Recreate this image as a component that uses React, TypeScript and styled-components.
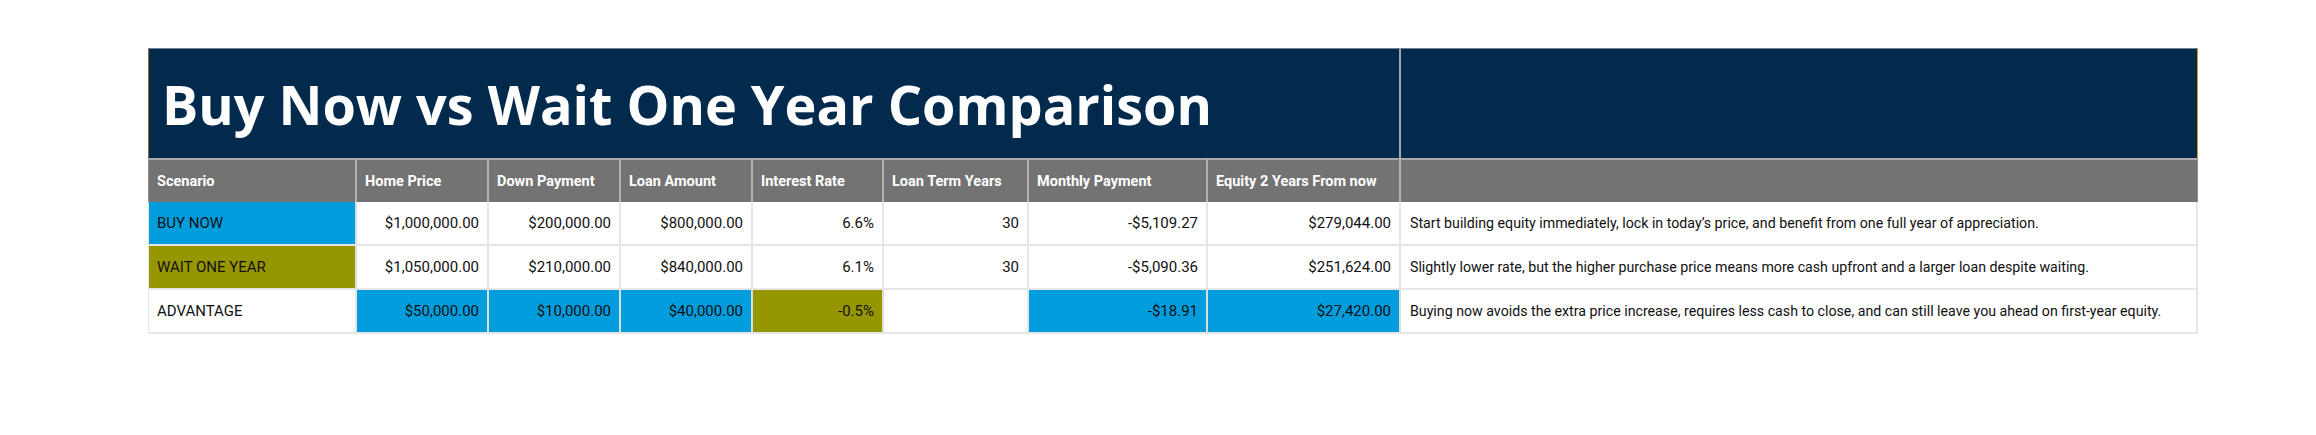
import React from 'react';
import styled, { createGlobalStyle } from 'styled-components';

const NAVY = '#012a4c';
const GRAY = '#737373';
const BLUE = '#019ddd';
const OLIVE = '#969600';

const GlobalStyle = createGlobalStyle`
    html, body {
        margin: 0;
        padding: 0;
        background: #ffffff;
    }
    body {
        font-family: Roboto, 'Liberation Sans', sans-serif;
        color: #111111;
    }
`;

const Page = styled.div`
    padding: 48px 0 0 148px;
    height: 435px;
    box-sizing: border-box;
`;

const Sheet = styled.div`
    display: grid;
    grid-template-columns: 209px 132px 132px 132px 131px 145px 179px 193px 797px;
    grid-template-rows: 110px 44px 44px 44px 44px;
    width: 2050px;
`;

const TitleCell = styled.div<{ $span: string; $edge?: 'left' | 'right' }>`
    grid-column: ${({ $span }) => $span};
    background: ${NAVY};
    border-top: 1px solid #6f7f8c;
    border-left: ${({ $edge }) => ($edge === 'left' ? '1px solid #8a6d28' : '0')};
    border-right: ${({ $edge }) => ($edge === 'right' ? '1px solid #d49a1e' : '2px solid #a5a8ab')};
    box-sizing: border-box;
    display: flex;
    align-items: center;
    padding-left: 13px;
`;

const Title = styled.h1`
    margin: 0;
    color: #ffffff;
    font-family: 'Open Sans', Roboto, sans-serif;
    font-weight: 700;
    font-size: 54px;
    line-height: 1;
`;

const HeadCell = styled.div<{ $first?: boolean; $last?: boolean }>`
    background: ${GRAY};
    color: #ffffff;
    font-weight: 700;
    font-size: 14.5px;
    border-top: 2px solid #a9a9a9;
    border-right: ${({ $last }) => ($last ? '1px solid #8c8c8c' : '2px solid #b3b3b3')};
    border-left: ${({ $first }) => ($first ? '1px solid #8c8c8c' : '0')};
    box-sizing: border-box;
    display: flex;
    align-items: center;
    padding-left: 8px;
    white-space: nowrap;
`;

const Cell = styled.div<{ $bg?: string; $align?: 'left' | 'right'; $first?: boolean; $note?: boolean }>`
    background: ${({ $bg }) => $bg || '#ffffff'};
    font-size: ${({ $note }) => ($note ? '14.2px' : '15px')};
    border-bottom: 2px solid #e6e6e6;
    border-right: 2px solid ${({ $bg }) => ($bg ? '#dcdcdc' : '#e6e6e6')};
    border-left: ${({ $first }) => ($first ? '1px solid #e6e6e6' : '0')};
    box-sizing: border-box;
    display: flex;
    align-items: center;
    justify-content: ${({ $align }) => ($align === 'right' ? 'flex-end' : 'flex-start')};
    padding: 0 8px 0 ${({ $note }) => ($note ? '9px' : '8px')};
    white-space: nowrap;
`;

type Value = { text: string; bg?: string };

type Row = {
    label: string;
    labelBg?: string;
    values: Value[];
    note: string;
};

const headers = [
    'Scenario',
    'Home Price',
    'Down Payment',
    'Loan Amount',
    'Interest Rate',
    'Loan Term Years',
    'Monthly Payment',
    'Equity 2 Years From now',
];

const rows: Row[] = [
    {
        label: 'BUY NOW',
        labelBg: BLUE,
        values: [
            { text: '$1,000,000.00' },
            { text: '$200,000.00' },
            { text: '$800,000.00' },
            { text: '6.6%' },
            { text: '30' },
            { text: '-$5,109.27' },
            { text: '$279,044.00' },
        ],
        note: 'Start building equity immediately, lock in today\u2019s price, and benefit from one full year of appreciation.',
    },
    {
        label: 'WAIT ONE YEAR',
        labelBg: OLIVE,
        values: [
            { text: '$1,050,000.00' },
            { text: '$210,000.00' },
            { text: '$840,000.00' },
            { text: '6.1%' },
            { text: '30' },
            { text: '-$5,090.36' },
            { text: '$251,624.00' },
        ],
        note: 'Slightly lower rate, but the higher purchase price means more cash upfront and a larger loan despite waiting.',
    },
    {
        label: 'ADVANTAGE',
        values: [
            { text: '$50,000.00', bg: BLUE },
            { text: '$10,000.00', bg: BLUE },
            { text: '$40,000.00', bg: BLUE },
            { text: '-0.5%', bg: OLIVE },
            { text: '' },
            { text: '-$18.91', bg: BLUE },
            { text: '$27,420.00', bg: BLUE },
        ],
        note: 'Buying now avoids the extra price increase, requires less cash to close, and can still leave you ahead on first-year equity.',
    },
];

export default function App() {
    return (
        <>
            <GlobalStyle />
            <Page>
                <Sheet>
                    <TitleCell $span="1 / 9" $edge="left">
                        <Title>Buy Now vs Wait One Year Comparison</Title>
                    </TitleCell>
                    <TitleCell $span="9 / 10" $edge="right" />

                    {headers.map((h, i) => (
                        <HeadCell key={h} $first={i === 0}>
                            {h}
                        </HeadCell>
                    ))}
                    <HeadCell $last />

                    {rows.map((row) => (
                        <React.Fragment key={row.label}>
                            <Cell $bg={row.labelBg} $first>
                                {row.label}
                            </Cell>
                            {row.values.map((v, i) => (
                                <Cell key={i} $bg={v.bg} $align="right">
                                    {v.text}
                                </Cell>
                            ))}
                            <Cell $note>{row.note}</Cell>
                        </React.Fragment>
                    ))}
                </Sheet>
            </Page>
        </>
    );
}
